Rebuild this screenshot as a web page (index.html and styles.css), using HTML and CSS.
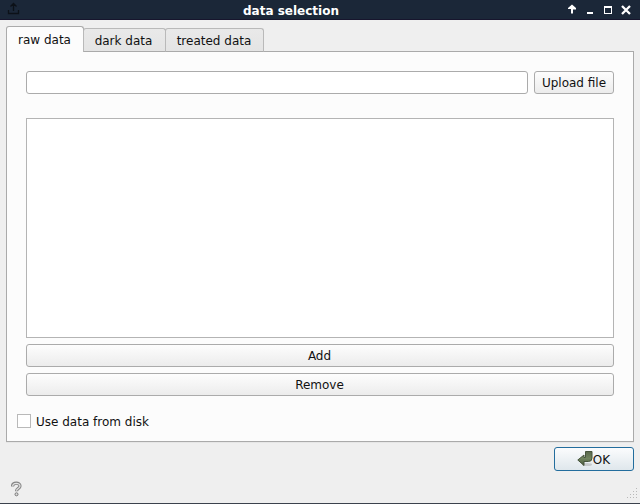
FILE: index.html
```html
<!DOCTYPE html>
<html lang="en">
<head>
<meta charset="utf-8">
<title>data selection</title>
<link rel="stylesheet" href="styles.css">
</head>
<body>
<div class="window">
  <header class="titlebar">
    <svg class="app-icon" width="14" height="14" viewBox="0 0 14 14"><path d="M1.5 8v3.5h10V8M6.5 9V1.5M3.5 4.5l3-3 3 3" fill="none" stroke="#0c1118" stroke-width="1.3"/></svg>
    <h1 class="title">data selection</h1>
    <svg class="controls" width="66" height="12" viewBox="0 0 66 12" fill="none" stroke="#fff" stroke-width="2">
      <path d="M5 9.5V5H2V4l4-3.5L10 4v1.500H7v4z" fill="#fff" stroke="none"/>
      <path d="M21 9h6"/>
      <path d="M38 2h8v8h-8zM39 4v5h6V4z" fill="#fff" fill-rule="evenodd" stroke="none"/>
      <path d="m56 2 8 8m0-8-8 8" stroke-width="2.3"/>
    </svg>
  </header>
  <nav class="tabs">
    <div class="tab active">raw data</div>
    <div class="tab dark">dark data</div>
    <div class="tab treated">treated data</div>
  </nav>
  <main class="panel">
    <div class="upload-row">
      <input class="path" type="text" aria-label="File">
      <button class="button upload">Upload file</button>
    </div>
    <div class="list"></div>
    <button class="button wide">Add</button>
    <button class="button wide">Remove</button>
    <label class="check"><span class="box"></span><span class="check-label">Use data from disk</span></label>
  </main>
  <div class="actions">
    <button class="button ok">
      <svg width="16" height="17" viewBox="0 0 16 17"><defs><linearGradient id="g" x2="0" y2="1"><stop stop-color="#59684c"/><stop offset=".5" stop-color="#71845f"/><stop offset="1" stop-color="#465739"/></linearGradient></defs><ellipse cx="10" cy="14.500" rx="5" ry="1.500" fill="#c5c9cb"/><path d="M8.500 1.500h6.500v6.500q0 3.500-3.500 3.500H7V15.500L.8 10 7 5v2.500h1.500z" fill="url(#g)" stroke="#46543c"/></svg>
      <span>OK</span>
    </button>
  </div>
  <footer class="status">
    <svg width="12" height="16" viewBox="0 0 12 16" fill="none"><path d="M1.500 5.500C1.500 1.200 9 1.200 9 5c0 2.500-3.500 2.300-3.500 5.200" stroke="#858585" stroke-width="3.200"/><path d="M1.700 5.200C1.700 1.500 9 1.500 9 5c0 2.500-3.500 2.300-3.500 4.700" stroke="#e4e4e4" stroke-width="1.200"/><circle cx="5.500" cy="13.300" r="1.500" fill="#ddd" stroke="#777"/></svg>
    <svg class="grip" width="11" height="11" viewBox="0 0 11 11" fill="#b8b8b8"><path d="M9 0h1v1H9zM6 3h1v1H6zM9 3h1v1H9zM3 6h1v1H3zM6 6h1v1H6zM9 6h1v1H9zM0 9h1v1H0zM3 9h1v1H3zM6 9h1v1H6zM9 9h1v1H9z"/></svg>
  </footer>
</div>
</body>
</html>
```
FILE: styles.css
```css
* { box-sizing: border-box; }
body { margin: 0; font: 12px/16px "DejaVu Sans", sans-serif; color: #111; background: #1b2738; }
.window { width: 640px; height: 504px; display: flex; flex-direction: column; background: #efefef; border-bottom: 1px solid #3b424c; overflow: hidden; }
.titlebar { height: 20px; flex: none; display: grid; grid-template-columns: 16px 1fr 75px; background: #1b2738; border-bottom: 1px solid #17152d; }
.app-icon { margin: 2px 0 0 7px; }
.title { margin: 3px 0 0 1px; font-size: 12px; line-height: 16px; text-align: center; color: #fff; }
.controls { margin: 4px 0 0 1px; }
.tabs { display: flex; align-items: flex-end; height: 32px; padding-left: 6px; flex: none; position: relative; z-index: 1; }
.tab { height: 24px; margin-left: -1px; padding-top: 4px; text-align: center; border: 1px solid #b9b9b9; border-bottom-color: #aaa; border-radius: 3px 3px 0 0; background: linear-gradient(#e9e9e9, #e4e4e4); }
.tab.active { width: 78px; height: 26px; margin-left: 0; padding: 5px 1px 0 0; border-color: #ababab; border-bottom: 0; background: #fcfcfc; }
.dark { width: 83px; padding-right: 2px; }
.treated { width: 99px; padding-right: 1px; }
.panel { height: 391px; flex: none; margin: -1px 6px 0; padding: 19px 19px 0; border: 1px solid #aaa; background: #fcfcfc; display: flex; flex-direction: column; box-shadow: 0 1px #e6e6e6; }
.upload-row { display: flex; gap: 6px; }
.path { flex: 1; height: 23px; border: 1px solid #ababab; border-radius: 3px; background: #fff; min-width: 0; outline: 0; }
.button { height: 23px; padding: 0; font: inherit; color: #111; border: 1px solid #ababab; border-radius: 3px; background: linear-gradient(#fdfdfd, #ececec); }
.upload { width: 80px; }
.list { height: 220px; margin-top: 24px; border: 1px solid #b4b4b4; background: #fff; }
.wide { margin-top: 6px; padding-right: 1px; }
.check { display: flex; align-items: center; gap: 5px; margin: 18px 0 0 -9px; height: 14px; }
.check-label { padding-top: 2px; }
.box { width: 14px; height: 14px; border: 1px solid #b9b9b9; background: #fff; }
.actions { display: flex; justify-content: flex-end; padding: 5px 6px 0; }
.ok { width: 80px; height: 24px; display: flex; align-items: center; justify-content: center; padding-right: 1px; border-color: #236d9d; background: linear-gradient(#fbfcfd, #dfe7ec); }
.ok svg { margin-top: -2px; }
.ok span { margin-top: 2px; }
.status { display: flex; justify-content: space-between; padding: 10px 2px 0 11px; }
.grip { margin-top: 7px; }
```
